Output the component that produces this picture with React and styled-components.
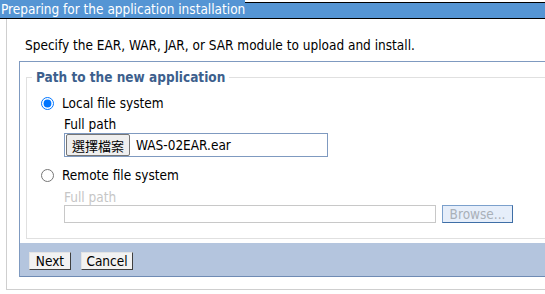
import React from "react";
import styled, { createGlobalStyle } from "styled-components";

const GlobalStyle = createGlobalStyle`
  html, body {
    margin: 0;
    padding: 0;
    background: #fff;
    overflow: hidden;
  }
  body {
    font-family: Tahoma, "DejaVu Sans Condensed", "DejaVu Sans", sans-serif;
    font-size: 13.5px;
    color: #000;
  }
`;

const TitleBar = styled.div`
  display: flex;
  height: 18px;
  border-bottom: 1px solid #000;
`;

const TitleText = styled.span`
  background: #5595d4;
  color: #fff;
  line-height: 18px;
  padding: 0 0 0 1px;
  white-space: nowrap;
`;

const TitleFill = styled.span`
  flex: 1;
  margin-top: 2px;
  border-top: 1px solid #000;
  background: #5595d4;
`;

const Wrapper = styled.div`
  margin-left: 6px;
  border-left: 1px solid #cfcfcf;
  border-bottom: 1px solid #cfcfcf;
  padding: 18px 0 12px 12px;
`;

const Description = styled.p`
  margin: 0 0 8px;
  padding-left: 6px;
  line-height: 16px;
`;

const Panel = styled.div`
  border-top: 1px solid #7f9ac0;
  border-left: 1px solid #7f9ac0;
`;

const FieldArea = styled.div`
  padding: 7px 0 4px 6px;
`;

const Fieldset = styled.fieldset`
  margin: 0;
  padding: 9px 0 15px 0;
  border: 1px solid #e0e0e0;
  border-right: none;
  min-width: 0;
`;

const Legend = styled.legend`
  margin-left: 5px;
  padding: 0 4px;
  line-height: 16px;
  font-weight: bold;
  color: #3d5f8d;
`;

const RadioRow = styled.label`
  display: flex;
  align-items: center;
  height: 18px;
  margin: ${(p) => (p.$first ? "0" : "9px")} 0 0 14px;

  input {
    width: 13px;
    height: 13px;
    margin: 0 8px 0 0;
  }
`;

const FieldLabel = styled.div`
  margin: ${(p) => (p.$disabled ? "5px" : "4px")} 0 0 37px;
  line-height: 16px;
  color: ${(p) => (p.$disabled ? "#c6c6c6" : "#000")};
`;

const FileBox = styled.div`
  display: flex;
  align-items: center;
  box-sizing: border-box;
  width: 264px;
  height: 24px;
  margin: 1px 0 0 37px;
  border: 1px solid #7f9ac0;
`;

const FileButton = styled.button`
  height: 22px;
  width: 64px;
  margin: 0 6px 0 1px;
  padding: 0;
  border: 1px solid #767676;
  border-radius: 2px;
  background: #efefef;
  font-family: "Noto Sans CJK TC", sans-serif;
  font-size: 13px;
  color: #000;
`;

const FileName = styled.span`
  line-height: 16px;
`;

const InputRow = styled.div`
  display: flex;
  gap: 6px;
  margin-left: 37px;
`;

const TextInput = styled.div`
  box-sizing: border-box;
  width: 372px;
  height: 18px;
  border: 1px solid #c8c8c8;
  background: #fff;
`;

const BrowseButton = styled.button`
  box-sizing: border-box;
  width: 71px;
  height: 18px;
  padding: 0;
  border: 1px solid;
  border-color: #7ba0cc #3e6ea6 #3e6ea6 #7ba0cc;
  background: #e6eefa;
  color: #a9b0b8;
  font-family: inherit;
  font-size: 13.5px;
  line-height: 14px;
`;

const ButtonBar = styled.div`
  display: flex;
  gap: 10px;
  height: 34px;
  box-sizing: border-box;
  padding: 9px 0 0 9px;
  background: #b4c5de;
  border-bottom: 1px solid #6f8bb4;
`;

const ActionButton = styled.button`
  box-sizing: border-box;
  width: ${(p) => p.$w}px;
  height: 18px;
  padding: 0;
  border: 1px solid;
  border-color: #e4e4e4 #404040 #404040 #e4e4e4;
  background: #f2f2f2;
  font-family: inherit;
  font-size: 13.5px;
  line-height: 15px;
  color: #000;
`;

export default function App() {
  return (
    <>
      <GlobalStyle />
      <TitleBar>
        <TitleText>Preparing for the application installation</TitleText>
        <TitleFill />
      </TitleBar>
      <Wrapper>
        <Description>
          Specify the EAR, WAR, JAR, or SAR module to upload and install.
        </Description>
        <Panel>
          <FieldArea>
            <Fieldset>
              <Legend>Path to the new application</Legend>
              <RadioRow $first>
                <input type="radio" name="src" defaultChecked />
                Local file system
              </RadioRow>
              <FieldLabel>Full path</FieldLabel>
              <FileBox>
                <FileButton type="button">選擇檔案</FileButton>
                <FileName>WAS-02EAR.ear</FileName>
              </FileBox>
              <RadioRow>
                <input type="radio" name="src" />
                Remote file system
              </RadioRow>
              <FieldLabel $disabled>Full path</FieldLabel>
              <InputRow>
                <TextInput />
                <BrowseButton type="button" disabled>
                  Browse...
                </BrowseButton>
              </InputRow>
            </Fieldset>
          </FieldArea>
          <ButtonBar>
            <ActionButton type="button" $w={42}>
              Next
            </ActionButton>
            <ActionButton type="button" $w={52}>
              Cancel
            </ActionButton>
          </ButtonBar>
        </Panel>
      </Wrapper>
    </>
  );
}
